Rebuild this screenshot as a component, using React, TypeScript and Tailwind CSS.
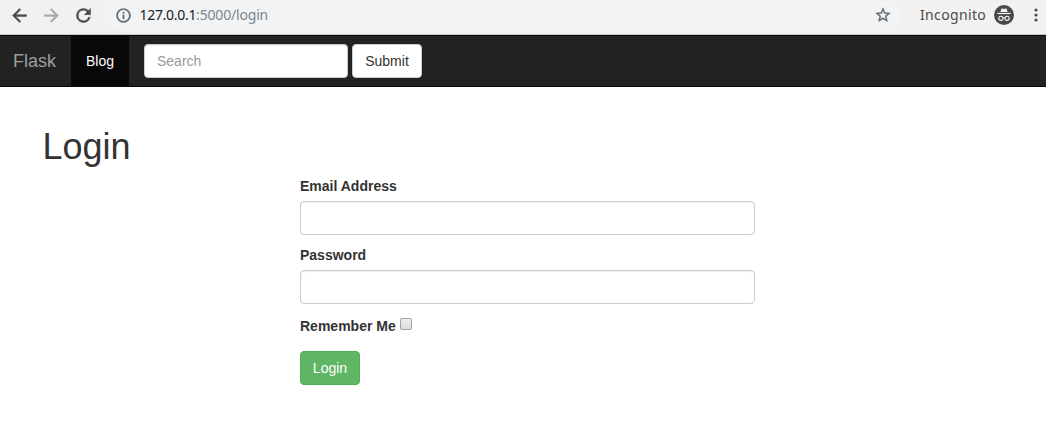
import React from "react";

function Icon({ d, className }: { d: string; className: string }) {
  return (
    <svg viewBox="0 0 24 24" fill="currentColor" stroke="currentColor" className={`shrink-0 ${className}`} aria-hidden="true">
      <path d={d} />
    </svg>
  );
}

const BACK = "M20 11H7.83l5.59-5.59L12 4l-8 8 8 8 1.41-1.41L7.83 13H20v-2z";
const FORWARD = "M12 4l-1.41 1.41L16.17 11H4v2h12.17l-5.58 5.59L12 20l8-8z";
const RELOAD =
  "M17.65 6.35A7.96 7.96 0 0 0 12 4a8 8 0 1 0 7.73 10h-2.08A6 6 0 1 1 12 6c1.66 0 3.14.69 4.22 1.78L13 11h7V4l-2.35 2.35z";
const INFO =
  "M11 17h2v-6h-2v6zm1-15C6.48 2 2 6.48 2 12s4.48 10 10 10 10-4.48 10-10S17.52 2 12 2zm0 18c-4.41 0-8-3.59-8-8s3.59-8 8-8 8 3.59 8 8-3.59 8-8 8zM11 9h2V7h-2v2z";
const STAR =
  "M22 9.24l-7.19-.62L12 2 9.19 8.63 2 9.24l5.46 4.73L5.82 21 12 17.27 18.18 21l-1.63-7.03L22 9.24zM12 15.4l-3.76 2.27 1-4.28-3.32-2.88 4.38-.38L12 6.1l1.71 4.04 4.38.38-3.32 2.88 1 4.28L12 15.4z";

function IncognitoBadge() {
  return (
    <svg viewBox="0 0 20 20" className="ml-2 h-5 w-5 shrink-0" aria-hidden="true">
      <circle cx="10" cy="10" r="10" fill="#4a4a4a" />
      <path d="M6.3 7L7.5 3.7q.2-.5.8-.3l1.7.5 1.7-.5q.6-.2.8.3L13.7 7z" fill="#f2f1f0" />
      <path d="M3.3 7.9h13.4v1.2H3.3z" fill="#f2f1f0" />
      <g fill="none" stroke="#f2f1f0" strokeWidth="1.1">
        <circle cx="6.9" cy="13.3" r="2.1" />
        <circle cx="13.1" cy="13.3" r="2.1" />
        <path d="M9 13q1-.7 2 0" />
      </g>
    </svg>
  );
}

function BrowserBar() {
  return (
    <header className="flex h-[35px] items-start border-b border-[#c5c8c9] bg-[#f2f1f0] font-['Noto_Sans',sans-serif] text-[#4b4b4b]">
      <div className="flex h-[30px] w-[105px] shrink-0 items-center gap-[11px] pl-[8.5px]">
        <Icon d={BACK} className="h-[21px] w-[21px] stroke-[0.6]" />
        <Icon d={FORWARD} className="h-[21px] w-[21px] stroke-[0.6] text-[#acabaa]" />
        <Icon d={RELOAD} className="h-[21px] w-[21px] stroke-[0.6]" />
      </div>
      <div className="mt-[1px] flex h-7 w-[796px] shrink-0 items-center rounded-full bg-[#f1f3f4] pr-[9px] pl-[9.5px]">
        <Icon d={INFO} className="h-[17px] w-[17px] stroke-[0.4] text-[#5f6368]" />
        <span className="ml-2 text-[14px] leading-5 tracking-[-0.3px] text-[#202124]">
          127.0.0.1<span className="tracking-[-0.18px] text-[#80868b]">:5000/login</span>
        </span>
        <Icon d={STAR} className="ml-auto h-[18px] w-[18px] stroke-[0.3] text-[#5f6368]" />
      </div>
      <div className="flex h-[30px] flex-1 items-center pl-[19px]">
        <span className="w-[66px] text-[14px] leading-5 tracking-[0.35px] whitespace-nowrap">Incognito</span>
        <IncognitoBadge />
        <svg viewBox="0 0 4 14" fill="currentColor" className="ml-5 h-[14px] w-1 shrink-0" aria-hidden="true">
          <circle cx="2" cy="2" r="1.6" />
          <circle cx="2" cy="7" r="1.6" />
          <circle cx="2" cy="12" r="1.6" />
        </svg>
      </div>
    </header>
  );
}

function Navbar() {
  return (
    <nav className="flex h-[52px] items-stretch border-y border-[#080808] bg-[#222]">
      <a className="flex w-[71px] items-center pl-[13px] text-[18px] leading-5 text-[#9d9d9d]">Flask</a>
      <a className="flex w-[58px] items-center justify-center bg-[#080808] text-white">Blog</a>
      <form className="ml-[15px] flex items-center gap-1" onSubmit={(e) => e.preventDefault()}>
        <input
          placeholder="Search"
          className="h-[34px] w-[204px] rounded border border-[#ccc] bg-white px-3 text-[#555] shadow-[inset_0_1px_1px_rgba(0,0,0,0.075)] outline-none placeholder:text-[#999]"
        />
        <button className="h-[34px] w-[70px] rounded border border-[#ccc] bg-white text-[#333]">Submit</button>
      </form>
    </nav>
  );
}

function Field({ id, label, type }: { id: string; label: string; type: string }) {
  return (
    <div className="flex flex-col gap-[5px]">
      <label htmlFor={id} className="font-bold">
        {label}
      </label>
      <input
        id={id}
        type={type}
        className="h-[34px] w-full rounded border border-[#ccc] bg-white px-3 text-[#555] shadow-[inset_0_1px_1px_rgba(0,0,0,0.075)] outline-none"
      />
    </div>
  );
}

export default function App() {
  return (
    <div className="h-[431px] overflow-hidden bg-white font-['Liberation_Sans',Arial,sans-serif] text-[14px] leading-5 text-[#333]">
      <BrowserBar />
      <Navbar />
      <main>
        <h1 className="pt-10 pl-[42.5px] text-[36px] leading-10 font-normal">Login</h1>
        <form className="mt-[9px] ml-[300px] flex w-[455px] flex-col gap-[10px]" onSubmit={(e) => e.preventDefault()}>
          <Field id="email" label="Email Address" type="email" />
          <Field id="password" label="Password" type="password" />
          <div className="mt-[2px] flex items-start gap-1">
            <label htmlFor="remember" className="font-bold">
              Remember Me
            </label>
            <input
              id="remember"
              type="checkbox"
              className="mt-[2px] h-3 w-3 appearance-none rounded-[2px] border border-[#a3a3a3] bg-linear-to-b from-[#eeeeee] to-[#dcdcdc]"
            />
          </div>
          <button className="mt-[5px] h-[34px] w-[60px] rounded border border-[#53ad57] bg-[#60b664] text-white">
            Login
          </button>
        </form>
      </main>
    </div>
  );
}
